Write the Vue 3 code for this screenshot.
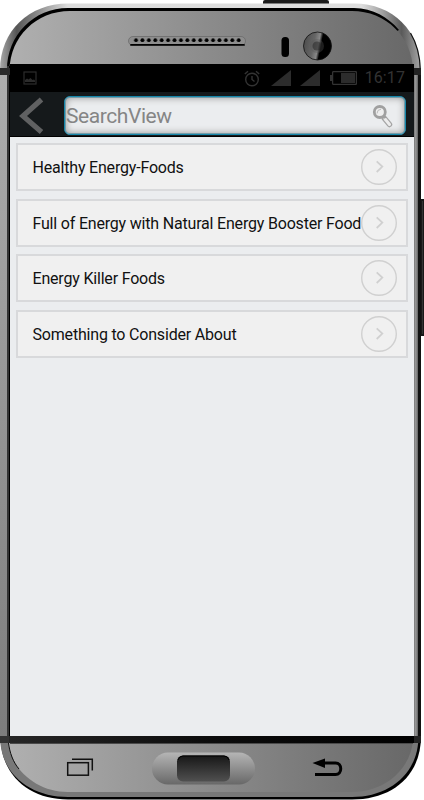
<script setup>
import { ref } from 'vue'

const query = ref('')
const time = '16:17'

const topics = [
  { id: 1, title: 'Healthy Energy-Foods' },
  { id: 2, title: 'Full of Energy with Natural Energy Booster Food' },
  { id: 3, title: 'Energy Killer Foods' },
  { id: 4, title: 'Something to Consider About' },
]
</script>

<template>
  <div class="phone">
    <!-- Phone body -->
    <svg class="shell" viewBox="0 0 424 800" width="424" height="800" aria-hidden="true">
      <defs>
        <linearGradient id="metal" x1="0" x2="1" y1="0" y2="0">
          <stop offset="0" stop-color="#b0b0b0" />
          <stop offset="0.5" stop-color="#8b8b8b" />
          <stop offset="1" stop-color="#686868" />
        </linearGradient>
        <linearGradient id="rimTop" x1="0" x2="1" y1="0" y2="0">
          <stop offset="0" stop-color="#a8a8a8" />
          <stop offset="0.04" stop-color="#555" />
          <stop offset="0.09" stop-color="#8c8c8c" />
          <stop offset="0.16" stop-color="#dcdcdc" />
          <stop offset="0.86" stop-color="#dedede" />
          <stop offset="0.91" stop-color="#a0a0a0" />
          <stop offset="0.955" stop-color="#5a5a5a" />
          <stop offset="1" stop-color="#a5a5a5" />
        </linearGradient>
        <linearGradient id="leftEdge" x1="0" x2="0" y1="0" y2="1">
          <stop offset="0" stop-color="#adadad" />
          <stop offset="1" stop-color="#7d7d7d" />
        </linearGradient>
        <linearGradient id="rightEdge" x1="0" x2="1" y1="0" y2="0">
          <stop offset="0" stop-color="#666" />
          <stop offset="0.5" stop-color="#999" />
          <stop offset="1" stop-color="#555" />
        </linearGradient>
        <linearGradient id="band" x1="0" x2="1" y1="0" y2="0">
          <stop offset="0" stop-color="#282828" />
          <stop offset="0.5" stop-color="#0c0c0c" />
          <stop offset="1" stop-color="#000" />
        </linearGradient>
        <linearGradient id="homeOuter" x1="0" x2="0" y1="0" y2="1">
          <stop offset="0" stop-color="#b5b5b5" />
          <stop offset="1" stop-color="#686868" />
        </linearGradient>
        <linearGradient id="homeInner" x1="0" x2="0" y1="0" y2="1">
          <stop offset="0" stop-color="#171717" />
          <stop offset="1" stop-color="#505050" />
        </linearGradient>
        <linearGradient id="lens" x1="0" x2="1" y1="0.4" y2="0.6">
          <stop offset="0" stop-color="#4d4d4d" />
          <stop offset="0.35" stop-color="#666" />
          <stop offset="0.52" stop-color="#888" />
          <stop offset="0.62" stop-color="#000" />
          <stop offset="1" stop-color="#000" />
        </linearGradient>
        <pattern id="holes" x="132.8" y="36" width="6.42" height="8" patternUnits="userSpaceOnUse">
          <circle cx="3.2" cy="4.2" r="1.9" fill="#000" />
        </pattern>
      </defs>

      <rect x="263" y="0" width="66" height="6" rx="2" fill="#1b1b1b" />
      <rect x="419" y="199" width="8" height="137" rx="1" fill="#181818" />
      <path d="M422.500 201V334" stroke="#333" />

      <!-- top -->
      <path d="M0 70C0 31 29 3.500 68 3.500H354C393 3.500 420.500 31 420.500 70Z" fill="url(#rimTop)" />
      <path d="M7 70C7 35 34 8 68 8H354C373 8.500 388 17 399 30L380 40V70Z" fill="#000" />
      <path d="M9.500 70C10 37 36 11 70 11H352C386 11 412 37 413 70Z" fill="url(#metal)" />
      <path d="M410.500 33C416.500 43 420 55 420.300 70" fill="none" stroke="#111" stroke-width="1.200" />

      <!-- sides -->
      <rect x="0" y="68" width="7" height="671" fill="url(#leftEdge)" />
      <rect x="7" y="66" width="3" height="674" fill="#333" />
      <rect x="9" y="66" width="1" height="674" fill="#000" />
      <rect x="413" y="75" width="5.500" height="665" fill="url(#rightEdge)" />
      <rect x="418" y="75" width="3" height="665" fill="#111" />
      <rect x="0" y="68" width="10" height="7" fill="#292929" />
      <rect x="413" y="68" width="8" height="7" fill="#222" />

      <!-- bottom -->
      <path d="M0.500 736C0.500 776 30 799.500 68 799.500H352C391 799.500 421 777 421 736Z" fill="#000" />
      <path d="M0 736C0 774 30 797 68 797H352C389 797 418.500 774 418.500 736Z" fill="#787878" />
      <path d="M8 740C10 769 36 792 68 792H352C386 792 411 768 413 740Z" fill="url(#metal)" />
      <path d="M8.300 742C9.800 753 13 762 19 769" fill="none" stroke="#111" stroke-width="1" />
      <rect x="0" y="736" width="421" height="7" fill="url(#band)" />
      <path d="M10 743.500H413" stroke="#4a4a4a" />
      <rect x="0" y="736" width="9" height="7" fill="#333" />
      <rect x="414" y="736" width="7" height="7" fill="#222" />

      <!-- speaker, sensor and camera -->
      <rect x="128.500" y="36.500" width="117" height="9" rx="4.500" fill="#8d8d8d" stroke="#666" stroke-width="0.700" />
      <path d="M131 44.900H244" stroke="#000" stroke-width="1.800" stroke-linecap="round" />
      <rect x="132.800" y="36" width="109.100" height="8" fill="url(#holes)" />
      <rect x="281.500" y="37" width="7.500" height="20" rx="3.500" fill="#000" />
      <circle cx="317.500" cy="46" r="14" fill="url(#lens)" stroke="#111" stroke-width="0.800" />
      <circle cx="317" cy="46" r="7" fill="#555" opacity="0.350" />
      <circle cx="317" cy="46" r="4.500" fill="#222" opacity="0.500" />

      <!-- hardware keys -->
      <g fill="none" stroke="#111" stroke-width="1.500">
        <rect x="67.700" y="762.700" width="20.700" height="12.500" />
        <path d="M72 759.300H92.300V770.500" />
      </g>
      <rect x="152" y="752.500" width="103" height="32" rx="16" fill="url(#homeOuter)" />
      <rect x="177" y="755.500" width="53" height="26" rx="6" fill="url(#homeInner)" />
      <path d="M178 760Q179 756 183 756H224Q228 756 229 760" fill="none" stroke="#000" stroke-width="1" />
      <path d="M323 763H335.500C342.500 763 342.500 774.500 335.500 774.500H315" fill="none" stroke="#000" stroke-width="3" />
      <path d="M312.500 763L325 758.500V768Z" fill="#000" />
    </svg>

    <main class="screen">
      <div class="status-bar">
        <svg class="status-pic" viewBox="0 0 14 14" width="14" height="14">
          <rect x="1" y="1" width="12" height="12" fill="none" stroke="#2c2c2c" stroke-width="1.200" />
          <path d="M2 11V9L4 7.500L5.500 8.500L7.500 7L9.500 9L11 8.500L12 9.500V11Z" fill="#2c2c2c" />
        </svg>
        <div class="status-icons">
          <svg viewBox="0 0 16 17" width="16" height="17" fill="none" stroke="#333" stroke-width="1.400">
            <circle cx="8" cy="9.500" r="6.300" />
            <path d="M8 6V9.500L10.500 11.500M0.800 4L4 1.200M15.200 4L12 1.200" />
          </svg>
          <svg viewBox="0 0 20 16" width="20" height="16"><path d="M0 16L20 0V16Z" fill="#2c2c2c" /></svg>
          <svg viewBox="0 0 20 16" width="20" height="16"><path d="M0 16L20 0V16Z" fill="#2c2c2c" /></svg>
          <svg viewBox="0 0 27 14" width="27" height="14">
            <rect x="2.600" y="0.600" width="23.800" height="12.800" rx="1" fill="none" stroke="#333" stroke-width="1.300" />
            <rect x="0" y="4" width="2" height="6" fill="#333" />
            <rect x="11" y="2" width="14" height="10" fill="#2c2c2c" />
          </svg>
        </div>
        <span class="clock">{{ time }}</span>
      </div>

      <header class="toolbar">
        <button class="back" aria-label="Back">
          <svg viewBox="0 0 26 38" width="26" height="38">
            <path d="M22.500 2.500L4 19L22.500 35" fill="none" stroke="#606162" stroke-width="5.200" />
          </svg>
        </button>
        <label class="search">
          <input v-model="query" type="text" placeholder="SearchView">
          <svg class="magnifier" viewBox="0 0 22 24" width="22" height="24">
            <path d="M12.500 14.500L17.500 20.500" stroke="#a5a5a5" stroke-width="5.500" stroke-linecap="round" />
            <path d="M13 15L17.500 20.500" stroke="#ececec" stroke-width="3" stroke-linecap="round" />
            <circle cx="7.800" cy="8" r="5.500" fill="#eee" stroke="#a0a0a0" stroke-width="2.800" />
            <path d="M5 9.500Q5 5.500 9 5.200" fill="none" stroke="#bbb" stroke-width="1" />
            <path d="M11.800 12.200L13.500 14" stroke="#a0a0a0" stroke-width="2.500" />
          </svg>
        </label>
      </header>

      <ul class="topics">
        <li v-for="topic in topics" :key="topic.id" class="topic">
          <span class="topic-title">{{ topic.title }}</span>
          <svg class="go" viewBox="0 0 36 36" width="36" height="36" fill="none" stroke="#d0d0d0">
            <circle cx="18" cy="18" r="17.300" stroke-width="1.400" />
            <path d="M15.700 12.300L21.300 17.600L15.700 23" stroke-width="1.800" />
          </svg>
        </li>
      </ul>
    </main>
  </div>
</template>

<style>
body {
  background: #fff;
  overflow: hidden;
}
</style>

<style scoped>
.phone {
  position: relative;
  width: 424px;
  height: 800px;
  box-sizing: border-box;
  padding: 64px 10px 64px 10px;
  font-family: Roboto, "Noto Sans", sans-serif;
  overflow: hidden;
}
.shell {
  position: absolute;
  top: 0;
  left: 0;
}

.screen {
  position: relative;
  width: 403.5px;
  height: 672px;
  display: flex;
  flex-direction: column;
  background: #ebedef;
}

/* Status bar */
.status-bar {
  display: flex;
  align-items: center;
  height: 28px;
  flex-shrink: 0;
  background: #000;
  padding: 0 8.5px 0 13px;
}
.status-icons {
  display: flex;
  align-items: center;
  gap: 9px;
  margin-left: auto;
}
.status-icons svg:first-child { margin-right: 2px; }
.status-icons svg:last-child { margin-left: 1px; }
.clock {
  margin-left: 8px;
  font-size: 16px;
  line-height: 30px;
  letter-spacing: 0.1px;
  color: #333;
}

/* Toolbar */
.toolbar {
  display: flex;
  align-items: center;
  height: 45px;
  flex-shrink: 0;
  box-sizing: border-box;
  padding: 3px 7.5px 0 9px;
  background: #15191b;
  border-bottom: 1px solid #000;
}
.back {
  display: flex;
  width: 45px;
  padding: 0;
  border: none;
  background: none;
}
.search {
  display: flex;
  align-items: center;
  flex: 1;
  height: 39px;
  box-sizing: border-box;
  border: 1px solid #1687aa;
  border-radius: 6px;
  background: #ebedef;
  box-shadow: inset 0 0 7px 1px #999, inset 0 0 0 1px #4a9db8;
}
.search input {
  flex: 1;
  min-width: 0;
  padding: 0 0 0 1px;
  border: none;
  outline: none;
  background: none;
  font: 21px Roboto, sans-serif;
  letter-spacing: -0.42px;
  color: #333;
}
.search input::placeholder { color: #858585; opacity: 1; }
.magnifier { margin-right: 11.5px; }

/* List */
.topics {
  list-style: none;
  margin: 0;
  padding: 6px 5.5px 0 6px;
  display: flex;
  flex-direction: column;
  gap: 7.6px;
}
.topic {
  display: flex;
  align-items: center;
  justify-content: space-between;
  height: 48px;
  box-sizing: border-box;
  padding: 0 9px 0 14.5px;
  border: 2px solid #d8d9db;
  background: #f0f0f0;
}
.topic-title {
  padding-top: 2px;
  font-size: 16px;
  line-height: 20px;
  letter-spacing: -0.19px;
  white-space: nowrap;
  color: #111;
}
.go { flex-shrink: 0; }
</style>
